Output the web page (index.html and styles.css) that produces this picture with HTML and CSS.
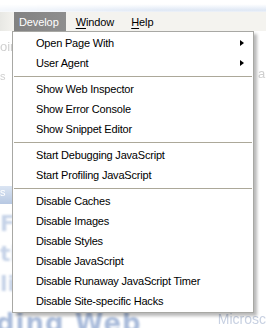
FILE: index.html
```html
<!DOCTYPE html>
<html lang="en">
<head>
    <meta charset="UTF-8">
    <title>Develop menu</title>
    <link rel="stylesheet" href="styles.css">
</head>
<body>
    <div class="screen">
        <div class="titlebar"></div>

        <div class="menubar">
            <span class="menubar-item active">Develop</span>
            <span class="menubar-item"><u>W</u>indow</span>
            <span class="menubar-item"><u>H</u>elp</span>
        </div>

        <!-- page behind the menu, faded out -->
        <div class="page">
            <div class="page-side">
                <span class="faint">oir</span>
                <span class="faint small">s</span>
                <span class="chip">s</span>
                <span class="big">F</span>
                <span class="big">ti</span>
                <span class="big">li</span>
            </div>
            <div class="page-right">
                <span class="faint">ar</span>
            </div>
            <div class="page-bottom">
                <span class="headline">ding Web</span>
                <span class="link">Microsc</span>
            </div>
        </div>

        <div class="menu">
            <div class="menu-item">Open Page With <span class="arrow"></span></div>
            <div class="menu-item">User Agent <span class="arrow"></span></div>
            <div class="separator"></div>
            <div class="menu-item">Show Web Inspector</div>
            <div class="menu-item">Show Error Console</div>
            <div class="menu-item">Show Snippet Editor</div>
            <div class="separator"></div>
            <div class="menu-item">Start Debugging JavaScript</div>
            <div class="menu-item">Start Profiling JavaScript</div>
            <div class="separator"></div>
            <div class="menu-item">Disable Caches</div>
            <div class="menu-item">Disable Images</div>
            <div class="menu-item">Disable Styles</div>
            <div class="menu-item">Disable JavaScript</div>
            <div class="menu-item">Disable Runaway JavaScript Timer</div>
            <div class="menu-item">Disable Site-specific Hacks</div>
        </div>
    </div>
</body>
</html>
```

FILE: styles.css
```css
body {
    margin: 0;
    background: #fff;
    font-family: "Liberation Sans", Arial, sans-serif;
    font-size: 11px;
    color: #000;
}
.screen {
    position: relative;
    width: 266px;
    height: 328px;
    overflow: hidden;
    background: #fff;
}
.titlebar {
    height: 12px;
    background: linear-gradient(to bottom, #fff 35%, #dfe8f5 85%, #eef2f8);
    -webkit-mask-image: linear-gradient(to right, rgba(0,0,0,0.35), #000 60%);
}
.menubar {
    display: flex;
    height: 19px;
    padding-left: 14px;
    background: linear-gradient(to right, #e8e8e4, #f4f3ef 14px, #f4f3ef);
}
.menubar-item {
    display: flex;
    align-items: center;
    padding: 0 9px 0 5px;
    margin-right: 3px;
    letter-spacing: -0.1px;
}
.menubar-item.active {
    background: linear-gradient(to right, #828282, #8e8e8e);
    color: #fff;
    padding-right: 7px;
    margin-right: 5px;
}
.menubar-item u {
    text-decoration-thickness: 1px;
    text-underline-offset: 2px;
}
.page {
    position: relative;
    height: 297px;
    color: #b9c6d8;
}
.page-side {
    display: flex;
    flex-direction: column;
    width: 12px;
    padding-top: 8px;
    gap: 16px;
    overflow: hidden;
}
.faint {
    color: #cfcfcf;
    font-size: 13px;
    filter: blur(0.4px);
    white-space: nowrap;
}
.small {
    font-size: 11px;
}
.chip {
    margin-top: 88px;
    height: 18px;
    background: linear-gradient(#dbe5f3, #b7c8e2);
    color: #fff;
    filter: blur(0.6px);
}
.big {
    margin-top: -6px;
    font-family: "DejaVu Sans", sans-serif;
    font-weight: bold;
    font-size: 22px;
    line-height: 20px;
    color: #c6d3e8;
    filter: blur(1px);
    white-space: nowrap;
}
.page-right {
    position: absolute;
    top: 35px;
    right: 0;
    width: 8px;
    overflow: hidden;
}
.page-bottom {
    display: flex;
    align-items: flex-end;
    justify-content: space-between;
    position: absolute;
    left: 0;
    right: 0;
    bottom: 0;
    height: 30px;
}
.headline {
    font-family: "DejaVu Sans", sans-serif;
    font-weight: bold;
    font-size: 26px;
    line-height: 26px;
    margin-left: -4px;
    margin-bottom: -8px;
    color: #aabcdb;
    filter: blur(1.2px);
    letter-spacing: 1px;
}
.link {
    font-size: 14px;
    color: #c8d1e2;
    margin-bottom: 1px;
    filter: blur(0.3px);
}

/* dropdown lies over the page */
.menu {
    position: absolute;
    left: 12px;
    top: 31px;
    width: 240px;
    padding: 1px 0;
    background: #fff;
    border: 1px solid #a8a8a4;
    box-shadow: 3px 3px 3px rgba(0, 0, 0, 0.28);
}
.menu-item {
    display: flex;
    align-items: center;
    justify-content: space-between;
    height: 20px;
    padding: 0 9px 0 23px;
    letter-spacing: -0.2px;
    white-space: nowrap;
}
.arrow {
    width: 0;
    height: 0;
    border-left: 4px solid #000;
    border-top: 3.5px solid transparent;
    border-bottom: 3.5px solid transparent;
}
.separator {
    height: 1px;
    margin: 3px 1px 2px;
    background: #aca899;
}
```
